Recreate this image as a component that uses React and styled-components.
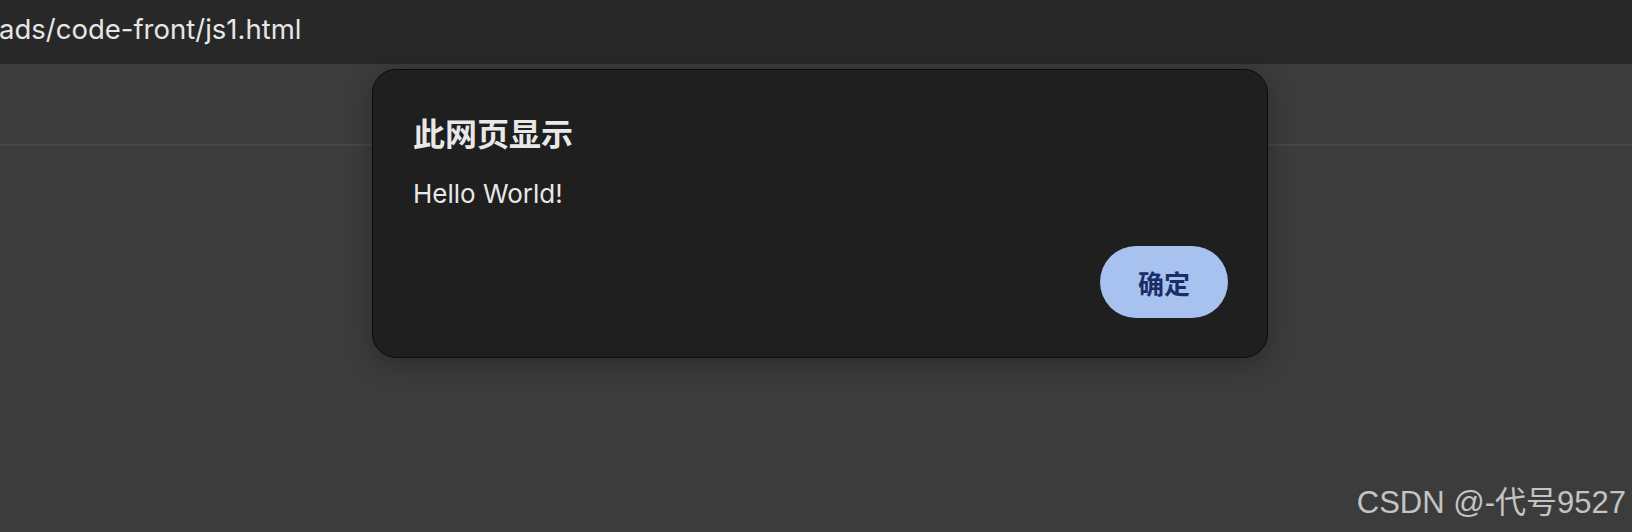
import React from 'react'
import styled, { createGlobalStyle } from 'styled-components'

const GlobalStyle = createGlobalStyle`
  html, body { margin: 0; padding: 0; }
  body {
    width: 1632px;
    height: 532px;
    overflow: hidden;
    background: #3c3c3c;
    font-family: "Inter", "Noto Sans CJK SC", sans-serif;
  }
`

const Page = styled.div`
  position: relative;
  width: 1632px;
  height: 532px;
  display: flex;
  flex-direction: column;
  background: #3c3c3c;
`

const AddressBar = styled.div`
  height: 64px;
  box-sizing: border-box;
  padding-bottom: 6px;
  background: #282828;
  display: flex;
  align-items: center;
  overflow: hidden;
`

const Url = styled.span`
  margin-left: -1px;
  color: #e6e6e6;
  font-size: 27.5px;
  white-space: nowrap;
`

const Toolbar = styled.div`
  height: 80px;
  border-bottom: 2px solid #474747;
`

const Body = styled.div`
  flex: 1;
`

const Dialog = styled.div`
  position: absolute;
  left: 372px;
  top: 69px;
  width: 896px;
  height: 289px;
  box-sizing: border-box;
  padding: 43px 39px 39px 40px;
  display: flex;
  flex-direction: column;
  background: #1f1f1f;
  border: 1px solid #0c0c0c;
  border-radius: 24px;
  box-shadow: 0 6px 28px rgba(0, 0, 0, 0.28);
`

const Title = styled.h2`
  margin: 0;
  color: #e8e8e8;
  font-family: "Noto Sans CJK SC", sans-serif;
  font-size: 32px;
  font-weight: 700;
  line-height: 38px;
`

const Message = styled.p`
  margin: 27px 0 0;
  color: #e8e8e8;
  font-size: 26px;
  line-height: 32px;
`

const Actions = styled.div`
  margin-top: auto;
  display: flex;
  justify-content: flex-end;
`

const OkButton = styled.button`
  width: 128px;
  height: 72px;
  border: none;
  border-radius: 36px;
  background: #a8c2f0;
  color: #1b2d66;
  font-family: "Noto Sans CJK SC", sans-serif;
  font-size: 26px;
  font-weight: 700;
  cursor: pointer;
`

const Watermark = styled.div`
  position: absolute;
  right: 6px;
  bottom: 11px;
  color: rgba(235, 235, 235, 0.78);
  font-family: "Liberation Sans", "Noto Sans CJK SC", sans-serif;
  font-size: 31px;
  line-height: 36px;
  white-space: nowrap;
`

export default function App() {
  return (
    <>
      <GlobalStyle />
      <Page>
        <AddressBar>
          <Url>ads/code-front/js1.html</Url>
        </AddressBar>
        <Toolbar />
        <Body />
        <Dialog role="alertdialog">
          <Title>此网页显示</Title>
          <Message>Hello World!</Message>
          <Actions>
            <OkButton>确定</OkButton>
          </Actions>
        </Dialog>
        <Watermark>CSDN @-代号9527</Watermark>
      </Page>
    </>
  )
}
